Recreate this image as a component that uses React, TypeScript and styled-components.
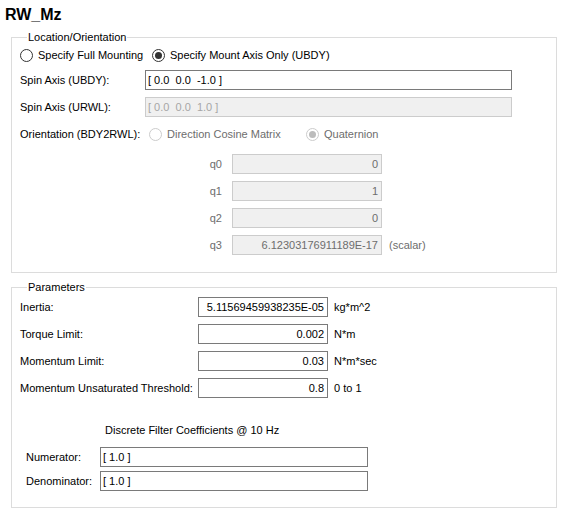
import React from 'react';
import styled, { createGlobalStyle } from 'styled-components';

const GlobalStyle = createGlobalStyle`
  html, body {
    margin: 0;
    padding: 0;
    background: #ffffff;
  }
  body {
    font-family: 'Liberation Sans', Arial, sans-serif;
    font-size: 11px;
    color: #000000;
  }
`;

const Page = styled.div`
  width: 569px;
  height: 521px;
  display: flex;
  flex-direction: column;
  padding: 6px 0 0 11px;
  box-sizing: border-box;
`;

const Title = styled.div`
  font-size: 16px;
  font-weight: bold;
  line-height: 18px;
  margin-left: -6px;
`;

const Group = styled.fieldset<{ $top: number; $padTop: number; $padBottom: number }>`
  width: 546px;
  box-sizing: border-box;
  margin: ${(p) => p.$top}px 0 0 0;
  padding: ${(p) => p.$padTop}px 8px ${(p) => p.$padBottom}px 8px;
  border: 1px solid #dcdcdc;
  min-width: 0;
  display: flex;
  flex-direction: column;
`;

const Legend = styled.legend`
  margin-left: 7px;
  padding: 0 1px;
  font-size: 11px;
  line-height: 13px;
`;

const Rows = styled.div<{ $gap: number }>`
  display: flex;
  flex-direction: column;
  gap: ${(p) => p.$gap}px;
`;

const Row = styled.div<{ $indent?: number }>`
  display: flex;
  align-items: center;
  height: 20px;
  padding-left: ${(p) => p.$indent ?? 0}px;
`;

const Label = styled.span<{ $width: number; $muted?: boolean; $right?: boolean }>`
  width: ${(p) => p.$width}px;
  flex: none;
  white-space: nowrap;
  color: ${(p) => (p.$muted ? '#6d6d6d' : '#000000')};
  text-align: ${(p) => (p.$right ? 'right' : 'left')};
`;

const Field = styled.div<{ $width: number; $kind?: 'edit' | 'readonly' | 'disabled'; $right?: boolean }>`
  width: ${(p) => p.$width}px;
  height: 20px;
  box-sizing: border-box;
  flex: none;
  display: flex;
  align-items: center;
  justify-content: ${(p) => (p.$right ? 'flex-end' : 'flex-start')};
  padding: 0 3px 0 2px;
  white-space: nowrap;
  overflow: hidden;
  border: 1px solid ${(p) => (p.$kind && p.$kind !== 'edit' ? '#cccccc' : '#7a7a7a')};
  background: ${(p) => (p.$kind && p.$kind !== 'edit' ? '#f0f0f0' : '#ffffff')};
  color: ${(p) =>
    p.$kind === 'disabled' ? '#a6a6a6' : p.$kind === 'readonly' ? '#6d6d6d' : '#000000'};
`;

const Unit = styled.span<{ $muted?: boolean }>`
  margin-left: 7px;
  white-space: nowrap;
  color: ${(p) => (p.$muted ? '#6d6d6d' : '#000000')};
`;

const RadioOption = styled.label<{ $disabled?: boolean; $width?: number }>`
  display: flex;
  align-items: center;
  gap: 5px;
  width: ${(p) => (p.$width ? `${p.$width}px` : 'auto')};
  flex: none;
  white-space: nowrap;
  color: ${(p) => (p.$disabled ? '#6d6d6d' : '#000000')};
`;

const RadioCircle = styled.span<{ $checked?: boolean; $disabled?: boolean }>`
  width: 13px;
  height: 13px;
  box-sizing: border-box;
  border-radius: 50%;
  border: 1px solid ${(p) => (p.$disabled ? '#cccccc' : '#333333')};
  background: #ffffff;
  display: flex;
  align-items: center;
  justify-content: center;

  &::after {
    content: '';
    width: 7px;
    height: 7px;
    border-radius: 50%;
    display: ${(p) => (p.$checked ? 'block' : 'none')};
    background: ${(p) => (p.$disabled ? '#bcbcbc' : '#333333')};
  }
`;

const SubHeading = styled.div`
  margin: 26px 0 10px 85px;
  line-height: 13px;
`;

const Radio = ({
  text,
  checked,
  disabled,
  width,
}: {
  text: string;
  checked?: boolean;
  disabled?: boolean;
  width?: number;
}) => (
  <RadioOption $disabled={disabled} $width={width}>
    <RadioCircle $checked={checked} $disabled={disabled} />
    {text}
  </RadioOption>
);

const quaternion = [
  { name: 'q0', value: '0' },
  { name: 'q1', value: '1' },
  { name: 'q2', value: '0' },
  { name: 'q3', value: '6.12303176911189E-17', note: '(scalar)' },
];

const params = [
  { name: 'Inertia:', value: '5.11569459938235E-05', unit: 'kg*m^2' },
  { name: 'Torque Limit:', value: '0.002', unit: 'N*m' },
  { name: 'Momentum Limit:', value: '0.03', unit: 'N*m*sec' },
  { name: 'Momentum Unsaturated Threshold:', value: '0.8', unit: '0 to 1' },
];

export default function App() {
  return (
    <Page>
      <GlobalStyle />
      <Title>RW_Mz</Title>

      <Group $top={7} $padTop={1} $padBottom={17}>
        <Legend>Location/Orientation</Legend>
        <Rows $gap={7}>
          <Row>
            <Radio text="Specify Full Mounting" width={132} />
            <Radio text="Specify Mount Axis Only (UBDY)" checked />
          </Row>
          <Row style={{ marginTop: -2 }}>
            <Label $width={125}>Spin Axis (UBDY):</Label>
            <Field $width={367}>[ 0.0&nbsp; 0.0&nbsp; -1.0 ]</Field>
          </Row>
          <Row>
            <Label $width={125}>Spin Axis (URWL):</Label>
            <Field $width={367} $kind="disabled">[ 0.0&nbsp; 0.0&nbsp; 1.0 ]</Field>
          </Row>
          <Row>
            <Label $width={129}>Orientation (BDY2RWL):</Label>
            <Radio text="Direction Cosine Matrix" disabled width={157} />
            <Radio text="Quaternion" checked disabled />
          </Row>
          <Rows $gap={7} style={{ marginTop: 3 }}>
            {quaternion.map((q) => (
              <Row key={q.name} $indent={170}>
                <Label $width={32} $muted $right>
                  {q.name}
                </Label>
                <Field $width={150} $kind="readonly" $right style={{ marginLeft: 10 }}>
                  {q.value}
                </Field>
                {q.note && <Unit $muted>{q.note}</Unit>}
              </Row>
            ))}
          </Rows>
        </Rows>
      </Group>

      <Group $top={8} $padTop={3} $padBottom={16}>
        <Legend>Parameters</Legend>
        <Rows $gap={7}>
          {params.map((p) => (
            <Row key={p.name}>
              <Label $width={178}>{p.name}</Label>
              <Field $width={130} $right>
                {p.value}
              </Field>
              <Unit style={{ marginLeft: 6 }}>{p.unit}</Unit>
            </Row>
          ))}
        </Rows>
        <SubHeading>Discrete Filter Coefficients @ 10 Hz</SubHeading>
        <Rows $gap={4}>
          <Row $indent={6}>
            <Label $width={74}>Numerator:</Label>
            <Field $width={268}>[ 1.0 ]</Field>
          </Row>
          <Row $indent={6}>
            <Label $width={74}>Denominator:</Label>
            <Field $width={268}>[ 1.0 ]</Field>
          </Row>
        </Rows>
      </Group>
    </Page>
  );
}
